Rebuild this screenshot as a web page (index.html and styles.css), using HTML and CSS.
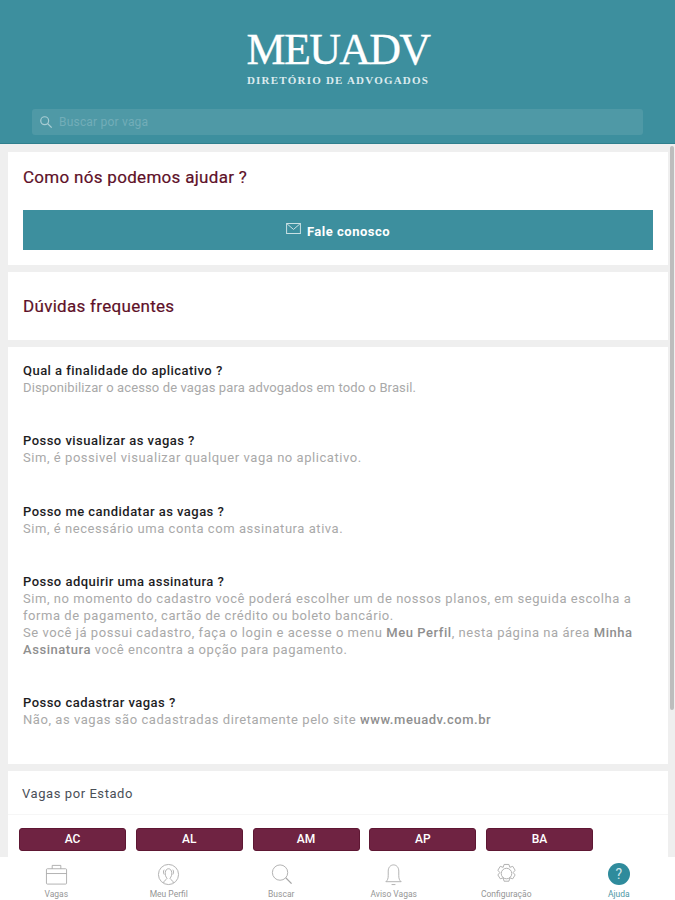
FILE: index.html
```html
<!DOCTYPE html>
<html lang="pt-BR">
<head>
<meta charset="utf-8">
<title>Ajuda - MeuADV</title>
<link rel="stylesheet" href="styles.css">
</head>
<body>
<div class="app">
  <header class="topbar">
    <div class="logo">
      <div class="logo-name">MEUADV</div>
      <div class="logo-sub">DIRETÓRIO DE ADVOGADOS</div>
    </div>
    <div class="search">
      <svg class="search-icon" viewBox="0 0 16 16" width="14" height="14"><circle cx="6.5" cy="6.5" r="4.5"/><path d="M10 10l4.5 4.5"/></svg>
      <span>Buscar por vaga</span>
    </div>
  </header>
  <main class="content">
    <section class="card help">
      <h2 class="title">Como nós podemos ajudar ?</h2>
      <div class="contact">
        <svg class="mail" viewBox="0 0 16 12" width="15" height="11"><rect x="0.5" y="0.5" width="15" height="11"/><path d="M1 1l7 6 7-6"/></svg>
        <span class="contact-label">Fale conosco</span>
      </div>
    </section>
    <section class="card faq-head">
      <h2 class="title">Dúvidas frequentes</h2>
    </section>
    <section class="card faq">
      <div class="qa qa-tight">
        <h3>Qual a finalidade do aplicativo ?</h3>
        <p>Disponibilizar o acesso de vagas para advogados em todo o Brasil.</p>
      </div>
      <div class="qa">
        <h3>Posso visualizar as vagas ?</h3>
        <p>Sim, é possivel visualizar qualquer vaga no aplicativo.</p>
      </div>
      <div class="qa">
        <h3>Posso me candidatar as vagas ?</h3>
        <p>Sim, é necessário uma conta com assinatura ativa.</p>
      </div>
      <div class="qa">
        <h3>Posso adquirir uma assinatura ?</h3>
        <p>Sim, no momento do cadastro você poderá escolher um de nossos planos, em seguida escolha a forma de pagamento, cartão de crédito ou boleto bancário.<br>Se você já possui cadastro, faça o login e acesse o menu <b>Meu Perfil</b>, nesta página na área <b>Minha Assinatura</b> você encontra a opção para pagamento.</p>
      </div>
      <div class="qa">
        <h3>Posso cadastrar vagas ?</h3>
        <p>Não, as vagas são cadastradas diretamente pelo site <b>www.meuadv.com.br</b></p>
      </div>
    </section>
    <section class="card states">
      <div class="states-title">Vagas por Estado</div>
      <div class="chips">
        <span class="chip">AC</span>
        <span class="chip">AL</span>
        <span class="chip">AM</span>
        <span class="chip">AP</span>
        <span class="chip">BA</span>
      </div>
    </section>
    <div class="scroll-thumb"></div>
  </main>
  <nav class="tabs">
    <div class="tab">
      <svg viewBox="0 0 24 24" width="24" height="24"><rect x="1.5" y="6" width="21" height="16" rx="1"/><path d="M1.5 11h21M7.500 6V2.500h9V6"/></svg>
      <span>Vagas</span>
    </div>
    <div class="tab">
      <svg viewBox="0 0 24 24" width="24" height="24"><circle cx="12" cy="12" r="10.5"/><path d="M7 21c0-3 3-3.500 3.500-5-3-3-2.500-10 1.500-10s4.500 7 1.500 10c.5 1.500 3.500 2 3.500 5"/><path d="M7.500 12c-1-1-1-4 0-5M16.500 12c1-1 1-4 0-5"/></svg>
      <span>Meu Perfil</span>
    </div>
    <div class="tab">
      <svg viewBox="0 0 24 24" width="24" height="24"><circle cx="10.500" cy="10" r="8"/><path class="lens-handle" d="M16.500 15.500l6 6"/></svg>
      <span>Buscar</span>
    </div>
    <div class="tab">
      <svg viewBox="0 0 24 24" width="24" height="24"><path d="M4 19.500c1.800-1.500 2.500-3 2.500-6.500V8.500c0-3.800 2.200-6.500 5.500-6.500s5.500 2.700 5.500 6.500V13c0 3.500.7 5 2.500 6.500z"/><path d="M10 22.500h4"/></svg>
      <span>Aviso Vagas</span>
    </div>
    <div class="tab">
      <svg viewBox="0 0 24 24" width="24" height="24"><path d="M9.500 1.500h5l1 3 3-1 2.500 4-2 2.500 2 2.500-2.500 4-3-1-1 3.500h-5l-1-3.500-3 1L3 12.500 5 10 3 7.500l2.500-4 3 1z"/><circle cx="12" cy="11" r="5.500"/></svg>
      <span>Configuração</span>
    </div>
    <div class="tab tab-active">
      <span class="help-badge">?</span>
      <span>Ajuda</span>
    </div>
  </nav>
</div>
</body>
</html>
```

FILE: styles.css
```css
* { box-sizing: border-box; }
html, body { margin: 0; padding: 0; height: 100%; }
body { font-family: Roboto, "Liberation Sans", sans-serif; background: #efefef; overflow: hidden; }
.app { display: flex; flex-direction: column; height: 900px; }

.topbar { flex: 0 0 144px; background: #3d8f9e; padding: 28px 32px 0; display: flex; flex-direction: column; align-items: center; border-bottom: 1px solid #2f7f8d; }
.logo { color: #fff; font-family: "Liberation Serif", serif; padding-left: 1px; }
.logo-name { font-size: 44px; line-height: 44px; letter-spacing: -1.7px; white-space: nowrap; text-align: center; -webkit-text-stroke: 0.3px #fff; }
.logo-sub { font-size: 11px; line-height: 12px; margin-top: 2px; letter-spacing: 1.2px; white-space: nowrap; text-align: center; color: #dcebee; font-weight: bold; }
.search { align-self: stretch; height: 26px; margin-top: 23px; background: #4f99a6; border-radius: 3px; display: flex; align-items: center; gap: 6px; padding-left: 7px; color: #72adb8; font-size: 12px; letter-spacing: 0.2px; }
.search-icon { fill: none; stroke: #a9cdd4; stroke-width: 1.4; }

.content { flex: 1; min-height: 0; overflow: hidden; position: relative; padding: 8px 7px 0 8px; display: flex; flex-direction: column; gap: 7px; }
.card { background: #fff; flex: none; }
.title { margin: 0; font-size: 17px; font-weight: 400; color: #5e1028; letter-spacing: 0.3px; -webkit-text-stroke: 0.2px #5e1028; }

.help { height: 113px; padding: 15px 15px 0; }
.help .title { line-height: 20px; }
.contact { margin-top: 23px; height: 40px; background: #3d8f9e; color: #fff; display: flex; align-items: center; justify-content: center; gap: 6px; font-size: 13px; font-weight: 700; letter-spacing: 0.5px; }
.contact-label { padding-top: 2px; }
.mail { fill: none; stroke: #d5e7ea; stroke-width: 1; margin-top: -3px; }

.faq-head { height: 68px; padding: 0 15px; display: flex; align-items: center; }

.faq { height: 417px; padding: 15px 15px 0; }
.qa { margin-bottom: 36.300px; }
.qa h3 { margin: 0; font-size: 13px; line-height: 17px; font-weight: 500; color: #1d1d1f; letter-spacing: 0.47px; }
.qa p { margin: 0; font-size: 13px; line-height: 17px; color: #a9a9a9; letter-spacing: 0.55px; }
.qa-tight p { letter-spacing: 0.12px; }
.qa b { font-weight: 500; color: #8f8f8f; }

.states { height: 200px; }
.states-title { height: 44px; padding: 14px 0 0 14px; font-size: 13px; line-height: 17px; color: #4a4f57; letter-spacing: 0.57px; border-bottom: 1px solid #f6f6f6; }
.chips { display: flex; gap: 9.750px; padding: 13px 0 0 11px; }
.chip { width: 107px; height: 23px; padding-bottom: 1px; background: #6f2342; border: 1px solid #5e1733; border-radius: 3px; color: #fff; font-size: 12px; font-weight: 500; display: flex; align-items: center; justify-content: center; }

.scroll-thumb { position: absolute; top: 2px; right: 1px; width: 4px; height: 564px; background: #bdbdbd; border-radius: 2px; }

.tabs { flex: 0 0 43px; background: #fff; display: grid; grid-template-columns: repeat(6, 1fr); padding: 6px 0 0 0; }
.tab { display: flex; flex-direction: column; align-items: center; font-size: 8.500px; line-height: 11px; color: #969696; }
.tab svg { width: 23px; height: 23px; fill: none; stroke: #a6a6a6; stroke-width: 0.9; margin-bottom: 3px; }
.tab svg .lens-handle { stroke-width: 1.4; }
.help-badge { width: 22px; height: 22px; margin-bottom: 4px; border-radius: 50%; background: #2f8b9c; color: #cfe6ea; font-size: 14px; line-height: 22px; text-align: center; }
.tab-active { color: #4d97a5; }
```
